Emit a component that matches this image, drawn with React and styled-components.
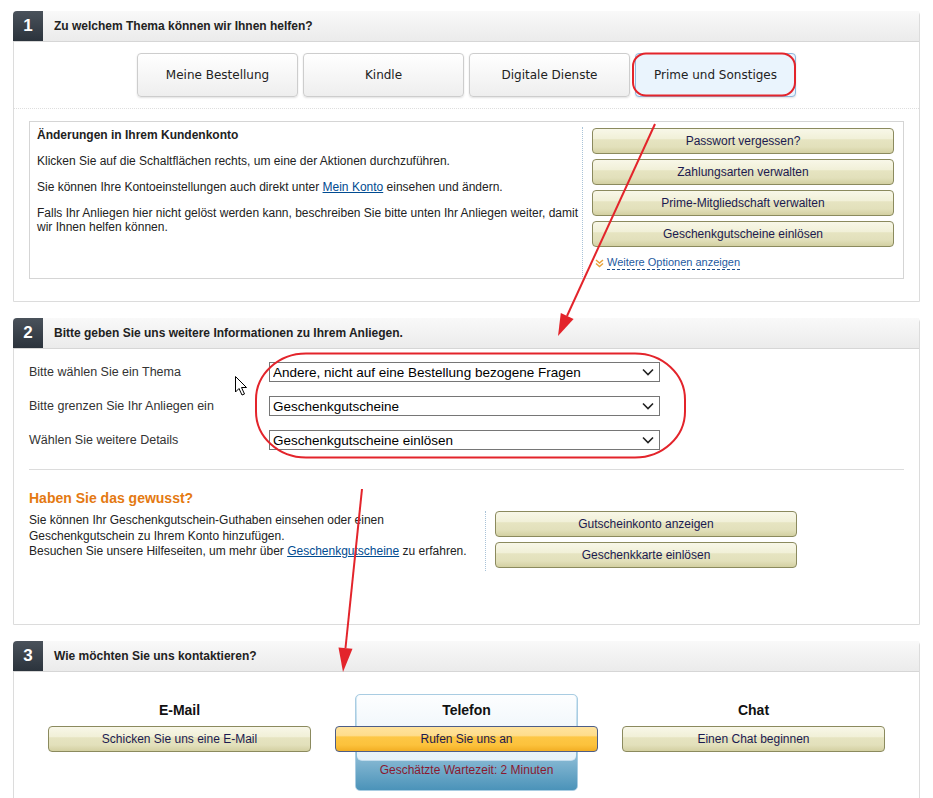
import styled, { createGlobalStyle, css } from "styled-components";

const GlobalStyle = createGlobalStyle`
  body {
    margin: 0;
    background: #fff;
    font-family: "Liberation Sans", Arial, sans-serif;
    font-size: 12px;
    color: #222;
  }
`;

const Page = styled.div`
  position: relative;
  width: 933px;
  height: 798px;
  overflow: hidden;
  box-sizing: border-box;
  padding: 11px 13px 0;
  display: flex;
  flex-direction: column;
  gap: 16px;
`;

const Section = styled.div`
  border: 1px solid #dcdcdc;
  border-radius: 4px 4px 0 0;
  background: #fff;
  flex-shrink: 0;
`;

const SectionHeader = styled.div`
  display: flex;
  height: 30px;
  margin: -1px 0 0 -1px;
  background: linear-gradient(#f9f9f9, #ebebeb);
  border-bottom: 1px solid #d6d6d6;
`;

const StepNum = styled.div`
  width: 30px;
  display: flex;
  align-items: center;
  justify-content: center;
  background: linear-gradient(#4a525b, #2b333c);
  color: #fff;
  font-size: 17px;
  font-weight: bold;
  border-radius: 4px 0 0 0;
`;

const HeaderTitle = styled.div`
  padding-left: 11px;
  line-height: 30px;
  font-weight: bold;
  font-size: 12px;
  color: #222;
`;

const Body1 = styled.div`
  padding: 11px 15px 22px;
`;

const TabRow = styled.div`
  display: flex;
  justify-content: center;
  gap: 5px;
`;

const Tab = styled.button`
  width: 161px;
  height: 44px;
  border: 1px solid #cdcdcd;
  border-radius: 4px;
  background: linear-gradient(#ffffff, #eeeeee);
  box-shadow: 0 1px 2px rgba(0, 0, 0, 0.12);
  font-family: "DejaVu Sans", Verdana, sans-serif;
  font-size: 12px;
  color: #222;
  ${(p) =>
    p.$active &&
    css`
      background: #eaf4fd;
      border-color: #8fb7de;
    `}
`;

const DottedRule = styled.div`
  margin: 11px -15px 12px;
  border-top: 1px dotted #dedede;
`;

const InfoBox = styled.div`
  display: grid;
  grid-template-columns: 1fr 321px;
  height: 158px;
  box-sizing: border-box;
  border: 1px solid #d5d5d5;
`;

const InfoText = styled.div`
  padding: 6px 0 0 7px;
  line-height: 14px;
  color: #222;

  h4 {
    margin: 0;
    font-size: 12px;
    font-weight: bold;
  }
  p {
    margin: 12px 0 0;
  }
`;

const ActionCol = styled.div`
  margin: 5px 0 1px;
  padding: 1px 9px 0 9px;
  border-left: 1px dotted #a9c3d8;
  display: flex;
  flex-direction: column;
  gap: 5px;
`;

const TanButton = styled.button`
  height: 26px;
  width: ${(p) => p.$width || "100%"};
  border: 1px solid #8b8a5e;
  border-radius: 4px;
  background: linear-gradient(
    #f8f7e8 0%,
    #f1f0d8 40%,
    #e6e4c1 45%,
    #e2e0bb 75%,
    #d3d0a2 100%
  );
  font-family: "Liberation Sans", Arial, sans-serif;
  font-size: 12px;
  color: #1b1a50;
  padding: 0;
  flex-shrink: 0;
`;

const OrangeButton = styled(TanButton)`
  border-color: #4c5d88;
  background: linear-gradient(
    #ffe39d 0%,
    #fedd8c 35%,
    #fdc745 42%,
    #fcc23c 75%,
    #f2ae24 100%
  );
`;

const MoreLink = styled.div`
  margin-top: 4px;
  display: flex;
  align-items: center;
  gap: 3px;
  padding-left: 3px;

  span {
    color: #1e5aa0;
    font-size: 11px;
    border-bottom: 1px dashed #1e4f8c;
    line-height: 13px;
  }
`;

const Link = styled.a`
  color: #004b91;
  text-decoration: underline;
`;

const Body2 = styled.div`
  height: 275px;
  box-sizing: border-box;
  padding: 13px 15px 0;
`;

const FormGrid = styled.div`
  display: grid;
  grid-template-columns: 240px 391px;
  row-gap: 14px;
  align-items: center;
`;

const FieldLabel = styled.label`
  font-size: 12.5px;
  color: #333;
`;

const SelectWrap = styled.div`
  position: relative;
  height: 20px;

  svg {
    position: absolute;
    right: 6px;
    top: 6px;
    pointer-events: none;
  }
`;

const Select = styled.select`
  appearance: none;
  width: 100%;
  height: 20px;
  box-sizing: border-box;
  border: 1px solid #767676;
  border-radius: 0;
  background: #fff;
  padding: 0 3px;
  font-family: "Liberation Sans", Arial, sans-serif;
  font-size: 13.5px;
  color: #000;
`;

const Rule = styled.div`
  margin-top: 19px;
  border-top: 1px solid #dcdcdc;
`;

const TipGrid = styled.div`
  display: grid;
  grid-template-columns: 456px 1fr;
  margin-top: 20px;
`;

const TipTitle = styled.h3`
  margin: 0 0 7px;
  font-size: 14px;
  font-weight: bold;
  color: #e47911;
`;

const TipText = styled.p`
  margin: 0;
  line-height: 15.5px;
  color: #222;
`;

const TipActions = styled.div`
  margin-top: 21px;
  padding: 0 0 3px 9px;
  border-left: 1px dotted #a9c3d8;
  display: flex;
  flex-direction: column;
  gap: 5px;
  align-self: start;
`;

const Body3 = styled.div`
  height: 140px;
  padding-top: 22px;
  display: grid;
  grid-template-columns: repeat(3, 287px);
  justify-content: center;
  align-items: start;
`;

const ContactCard = styled.div`
  justify-self: center;
  width: 221px;
  border: 1px solid transparent;
  border-radius: 5px;
  ${(p) =>
    p.$highlight &&
    css`
      border-color: #a9cce2;
      background: linear-gradient(#d9ecf6 0%, #b6d6e8 40%, #4b93b9 100%);
    `}
`;

const CardTop = styled.div`
  padding: 6px 0 8px;
  display: flex;
  flex-direction: column;
  align-items: center;
  border-radius: 5px;
  ${(p) =>
    p.$highlight &&
    css`
      margin: 0 1px;
      border-radius: 4px 4px 5px 5px;
      background: linear-gradient(#fdfeff, #e6f1f8);
      border-bottom: 1px solid #c3dcec;
    `}
`;

const ContactTitle = styled.div`
  font-size: 14px;
  font-weight: bold;
  color: #111;
  line-height: 18px;
  margin-bottom: 7px;
`;

const WaitText = styled.div`
  height: 29px;
  padding-top: 2px;
  box-sizing: border-box;
  text-align: center;
  color: #8a1a30;
  font-size: 12px;
  line-height: 14px;
`;

const Overlay = styled.svg`
  position: absolute;
  left: 0;
  top: 0;
  pointer-events: none;
  z-index: 10;
`;

const Chevron = () => (
  <svg width="12" height="8" viewBox="0 0 12 8">
    <polyline points="1,1.5 6,6.5 11,1.5" fill="none" stroke="#222" strokeWidth="1.6" />
  </svg>
);

const DoubleChevron = () => (
  <svg width="9" height="9" viewBox="0 0 9 9">
    <polyline points="1,1 4.5,4 8,1" fill="none" stroke="#e8a23b" strokeWidth="1.5" />
    <polyline points="1,4.5 4.5,7.5 8,4.5" fill="none" stroke="#e8a23b" strokeWidth="1.5" />
  </svg>
);

const FieldSelect = ({ value }) => (
  <SelectWrap>
    <Select defaultValue={value}>
      <option>{value}</option>
    </Select>
    <Chevron />
  </SelectWrap>
);

const tabs = ["Meine Bestellung", "Kindle", "Digitale Dienste", "Prime und Sonstiges"];
const actions = [
  "Passwort vergessen?",
  "Zahlungsarten verwalten",
  "Prime-Mitgliedschaft verwalten",
  "Geschenkgutscheine einlösen",
];

export default function App() {
  return (
    <>
      <GlobalStyle />
      <Page>
        <Section>
          <SectionHeader>
            <StepNum>1</StepNum>
            <HeaderTitle>Zu welchem Thema können wir Ihnen helfen?</HeaderTitle>
          </SectionHeader>
          <Body1>
            <TabRow>
              {tabs.map((t, i) => (
                <Tab key={t} $active={i === 3}>
                  {t}
                </Tab>
              ))}
            </TabRow>
            <DottedRule />
            <InfoBox>
              <InfoText>
                <h4>Änderungen in Ihrem Kundenkonto</h4>
                <p>Klicken Sie auf die Schaltflächen rechts, um eine der Aktionen durchzuführen.</p>
                <p>
                  Sie können Ihre Kontoeinstellungen auch direkt unter <Link>Mein Konto</Link> einsehen und ändern.
                </p>
                <p>
                  Falls Ihr Anliegen hier nicht gelöst werden kann, beschreiben Sie bitte unten Ihr Anliegen weiter, damit
                  wir Ihnen helfen können.
                </p>
              </InfoText>
              <ActionCol>
                {actions.map((a) => (
                  <TanButton key={a}>{a}</TanButton>
                ))}
                <MoreLink>
                  <DoubleChevron />
                  <span>Weitere Optionen anzeigen</span>
                </MoreLink>
              </ActionCol>
            </InfoBox>
          </Body1>
        </Section>

        <Section>
          <SectionHeader>
            <StepNum>2</StepNum>
            <HeaderTitle>Bitte geben Sie uns weitere Informationen zu Ihrem Anliegen.</HeaderTitle>
          </SectionHeader>
          <Body2>
            <FormGrid>
              <FieldLabel>Bitte wählen Sie ein Thema</FieldLabel>
              <FieldSelect value="Andere, nicht auf eine Bestellung bezogene Fragen" />
              <FieldLabel>Bitte grenzen Sie Ihr Anliegen ein</FieldLabel>
              <FieldSelect value="Geschenkgutscheine" />
              <FieldLabel>Wählen Sie weitere Details</FieldLabel>
              <FieldSelect value="Geschenkgutscheine einlösen" />
            </FormGrid>
            <Rule />
            <TipGrid>
              <div>
                <TipTitle>Haben Sie das gewusst?</TipTitle>
                <TipText>
                  Sie können Ihr Geschenkgutschein-Guthaben einsehen oder einen
                  <br />
                  Geschenkgutschein zu Ihrem Konto hinzufügen.
                  <br />
                  Besuchen Sie unsere Hilfeseiten, um mehr über <Link>Geschenkgutscheine</Link> zu erfahren.
                </TipText>
              </div>
              <TipActions>
                <TanButton $width="302px">Gutscheinkonto anzeigen</TanButton>
                <TanButton $width="302px">Geschenkkarte einlösen</TanButton>
              </TipActions>
            </TipGrid>
          </Body2>
        </Section>

        <Section>
          <SectionHeader>
            <StepNum>3</StepNum>
            <HeaderTitle>Wie möchten Sie uns kontaktieren?</HeaderTitle>
          </SectionHeader>
          <Body3>
            <ContactCard>
              <CardTop>
                <ContactTitle>E-Mail</ContactTitle>
                <TanButton $width="263px">Schicken Sie uns eine E-Mail</TanButton>
              </CardTop>
            </ContactCard>
            <ContactCard $highlight>
              <CardTop $highlight>
                <ContactTitle>Telefon</ContactTitle>
                <OrangeButton $width="263px">Rufen Sie uns an</OrangeButton>
              </CardTop>
              <WaitText>Geschätzte Wartezeit: 2 Minuten</WaitText>
            </ContactCard>
            <ContactCard>
              <CardTop>
                <ContactTitle>Chat</ContactTitle>
                <TanButton $width="263px">Einen Chat beginnen</TanButton>
              </CardTop>
            </ContactCard>
          </Body3>
        </Section>

        <Overlay width="933" height="798" viewBox="0 0 933 798">
          <g fill="none" stroke="#e3242b" strokeWidth="2">
            <rect x="633" y="53.5" width="162" height="42" rx="13" />
            <rect x="256" y="353.5" width="429" height="104" rx="50" ry="46" />
            <line x1="655" y1="124" x2="567" y2="316" />
            <line x1="362" y1="489" x2="345.5" y2="648" />
          </g>
          <g fill="#e3242b">
            <polygon points="558,336 573.6,318.9 560.8,313.1" />
            <polygon points="343,672 352.5,648.8 338.5,647.4" />
          </g>
          <path
            d="M235.5 376.5 L235.5 392 L239 388.5 L242 395 L244.5 394 L241.5 387.5 L246.5 387.5 Z"
            fill="#fff"
            stroke="#000"
            strokeWidth="1"
            strokeLinejoin="round"
          />
        </Overlay>
      </Page>
    </>
  );
}
